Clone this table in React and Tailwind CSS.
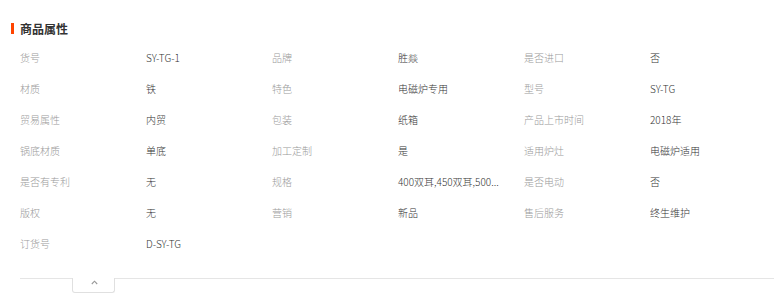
import React from 'react';

const rows = [
    ['货号', 'SY-TG-1', '品牌', '胜燚', '是否进口', '否'],
    ['材质', '铁', '特色', '电磁炉专用', '型号', 'SY-TG'],
    ['贸易属性', '内贸', '包装', '纸箱', '产品上市时间', '2018年'],
    ['锅底材质', '单底', '加工定制', '是', '适用炉灶', '电磁炉适用'],
    ['是否有专利', '无', '规格', '400双耳,450双耳,500...', '是否电动', '否'],
    ['版权', '无', '营销', '新品', '售后服务', '终生维护'],
    ['订货号', 'D-SY-TG'],
];

function App() {
    return (
        <div className="w-[783px] h-[299px] bg-white pt-[22px] font-['Noto_Sans_CJK_SC','Liberation_Sans',sans-serif] overflow-hidden">
            {/* title */}
            <div className="flex items-center h-[13px] pl-[11px]">
                <span className="w-[3px] h-[11px] bg-[#ff4400]" />
                <span className="ml-[6px] text-[12px] leading-[13px] font-bold text-[#333]">商品属性</span>
            </div>

            {/* attribute grid */}
            <div className="mt-[7px] ml-[20px] grid grid-cols-[repeat(6,126px)]">
                {rows.map((r, i) =>
                    r.map((cell, j) => (
                        <div
                            key={`${i}-${j}`}
                            className={
                                "h-[31px] flex items-center text-[10px] whitespace-nowrap " +
                                (j % 2 === 0 ? "text-[#999] font-light" : "text-[#333] font-light")
                            }
                        >
                            {cell}
                        </div>
                    ))
                )}
            </div>

            {/* collapse bar */}
            <div className="mt-[19px] ml-[20px] w-[754px] border-t border-[#e5e5e5]">
                <div className="-mt-px ml-[52px] w-[43px] h-[15px] bg-white border border-t-0 border-[#e0e0e0] rounded-b-[3px] flex justify-center pt-[2px] pl-[2px]">
                    <svg width="7" height="5" viewBox="0 0 7 5" fill="none">
                        <path d="M0.8 4 L3.5 1.2 L6.2 4" stroke="#999" strokeWidth="1.1" />
                    </svg>
                </div>
            </div>
        </div>
    );
}

export default App;
